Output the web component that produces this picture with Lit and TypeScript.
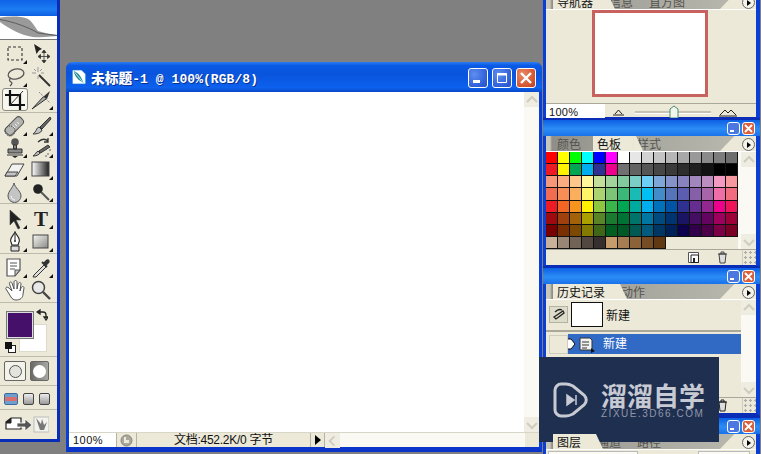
import { LitElement, html, css, svg } from "lit";
import { customElement } from "lit/decorators.js";

const SWATCHES = [
  "ff0000 ffff00 00ff00 00ffff 0000ff ff00ff ffffff e6e6e6 d2d2d2 c4c4c4 b6b6b6 a8a8a8 999999 8a8a8a 7c7c7c 6e6e6e",
  "ed1c24 fff200 00a651 00aeef 2e3192 ec008c 707070 626262 555555 464646 3a3a3a 2d2d2d 1f1f1f 121212 000000 000000",
  "f7977a f9ad81 fdc68a fff799 c4df9b a3d39c 82ca9d 7bcdc8 6ecff6 7ea7d8 8493ca 8882be a187be bc8dbf f49ac2 f6989d",
  "f26c4f f68e55 fbaf5c fff467 acd372 7cc576 3bb878 1abbb4 00bff3 438cca 5574b9 5c5cb0 8560a8 a864a8 ef6ea8 f16d7e",
  "ed1c24 f26522 f7941d fff200 8dc63f 39b54a 00a651 00a99d 00aeef 0072bc 0054a6 2e3192 662d91 92278f ec008c ed145b",
  "9e0b0f a0410d a36209 aba000 598527 1a7b30 007236 00746b 0076a3 004a80 003471 1b1464 440e62 630460 9e005d 9e0039",
  "790000 7b2e00 7d4900 827b00 406618 005e20 005826 005952 005b7f 003663 002157 0d004c 32004b 4b0049 7b0046 7a0026",
  "c7b299 998675 736357 534741 362f2d c69c6d a67c52 8c6239 754c24 603913",
].flatMap((r) => r.split(" "));

const ic = (body: unknown) =>
  html`<svg class="ico" viewBox="0 0 22 22" width="22" height="22">${body}</svg>`;

const ICONS = {
  marquee: svg`<rect x="4" y="4" width="14" height="13" fill="none" stroke="#333" stroke-width="1.1" stroke-dasharray="3 2"/>`,
  move: svg`<path d="M4 1l8 5-3 1.500L6.500 11z" fill="#222"/><path d="M14 8v11M9 13.500h10M14 7l-2 2.500h4zM14 20l-2-2.500h4zM8 13.500l2.500-2v4zM20 13.500l-2.500-2v4z" stroke="#333" fill="#333" stroke-width=".8"/>`,
  lasso: svg`<ellipse cx="12" cy="8" rx="8" ry="5" transform="rotate(-12 12 8)" fill="none" stroke="#555" stroke-width="1.300"/><path d="M7 12c-2 1-2 3 0 4s0 3-1 4" fill="none" stroke="#555" stroke-width="1.300"/>`,
  wand: svg`<path d="M9 9l11 11" stroke="#333" stroke-width="2"/><path d="M8 1v5M8 10v3M2 7h4M11 7h3M4 3l2 2M12 3l-2 2" stroke="#999" stroke-width="1"/>`,
  crop: svg`<path d="M6 1v15h15M1 6h15v15" fill="none" stroke="#111" stroke-width="2.200"/><path d="M5 17L19 2" stroke="#333" stroke-width="1"/>`,
  slice: svg`<path d="M2 20L14 7l2 3z" fill="#aaa" stroke="#333"/><path d="M13 8l7-6-3 8z" fill="#333"/><path d="M9 3l11 11" stroke="#888" stroke-width="1" stroke-dasharray="2 1"/>`,
  heal: svg`<rect x="6" y="1" width="9" height="21" rx="3.500" transform="rotate(45 11 11)" fill="#b4b4b0" stroke="#555"/><circle cx="6" cy="16" r="5" fill="none" stroke="#333" stroke-dasharray="1 1"/><path d="M9 11l2 2M11 9l2 2M13 7l2 2" stroke="#eee"/>`,
  brush: svg`<path d="M20 2L10 12l2 2L21 4z" fill="#666" stroke="#333"/><path d="M9 12c-3 1-2 4-6 7 4 0 8-1 9-4z" fill="#c4c4c4" stroke="#333"/>`,
  stamp: svg`<circle cx="11" cy="5" r="3.800" fill="#555"/><path d="M9.500 8h3v4h-3zM4 12h14v4H4zM3 18h16" fill="#888" stroke="#333"/><path d="M8 19l3 2 3-2z" fill="#222"/>`,
  hbrush: svg`<path d="M8 5c4-4 8-3 10-1M18 1v4h-4" fill="none" stroke="#333" stroke-width="1.300"/><path d="M18 8L9 14l1.500 2L20 10z" fill="#666" stroke="#333"/><path d="M8 14c-2 1-2 3-5 5 3 0 6-1 7-3z" fill="#bbb" stroke="#333"/><path d="M20 12v2M18 16v2M15 19h2" stroke="#666"/>`,
  eraser: svg`<path d="M8 5h12l-7 12H1z" fill="#f2f2f0" stroke="#444"/><path d="M3 13h11l-3 4H1z" fill="#c4c4c4" stroke="#444"/>`,
  gradient: svg`<defs><linearGradient id="g1"><stop offset="0" stop-color="#fff"/><stop offset="1" stop-color="#222"/></linearGradient></defs><rect x="2" y="3" width="17" height="14" fill="url(#g1)" stroke="#444"/>`,
  blur: svg`<path d="M10 2c-1 5-6 8-6 13a6.500 6.500 0 0 0 13 0c0-5-6-8-7-13z" fill="#c4c4c4" stroke="#555"/><path d="M7 15c0 2 2 4 4 4" stroke="#fff" fill="none"/>`,
  dodge: svg`<circle cx="8" cy="8" r="4.800" fill="#222"/><path d="M11 11l8 8" stroke="#555" stroke-width="2"/>`,
  select: svg`<path d="M6 2v15l4-4 4 8 2-1-4-8h5z" fill="#222" stroke="#444" stroke-width=".6"/>`,
  pen: svg`<path d="M11 1c1 3 6 6 4 10l-1 3H8l-1-3C5 7 10 4 11 1z" fill="#fff" stroke="#222" stroke-width="1.100"/><path d="M11 3v6" stroke="#222"/><circle cx="11" cy="10" r="1" fill="#222"/><path d="M7 15h8v5H7z" fill="#ddd" stroke="#222"/>`,
  shape: svg`<defs><linearGradient id="g2" x1="0" y1="0" x2="1" y2="1"><stop offset="0" stop-color="#f5f5f2"/><stop offset="1" stop-color="#8a8a88"/></linearGradient></defs><rect x="3" y="4" width="15" height="13" fill="url(#g2)" stroke="#444"/>`,
  notes: svg`<path d="M3 2h13v11l-5 6H3z" fill="#fff" stroke="#555" stroke-width="1.200"/><path d="M6 6h7M6 9h7M6 12h5" stroke="#555"/><path d="M16 13l-5 6v-6z" fill="#c4c4c4" stroke="#555"/>`,
  dropper: svg`<path d="M4 18l10-10 2 2L6 20H3z" fill="#ddd" stroke="#333"/><path d="M13 6l3-3c2-2 5 1 3 3l-3 3z" fill="#333"/><path d="M12 5l5 5" stroke="#333" stroke-width="2"/>`,
  hand: svg`<path d="M5 9c-2-2-4 0-3 1l5 8c1 2 3 3 5 3 4 0 7-2 7-6l1-6c0-2-2-2-3 0l-1 3 1-7c0-2-2-2-3 0l-1 5V3c0-2-3-2-3 0v7L8 4C7 2 5 3 5.500 5L8 12z" fill="#fff" stroke="#555" stroke-width="1"/>`,
  zoom: svg`<circle cx="8.500" cy="8.500" r="6" fill="#e8e8e8" stroke="#444" stroke-width="1.500"/><path d="M13 13l7 7" stroke="#444" stroke-width="2.400"/>`,
};

const chevUp = svg`<path d="M3 10l5-5 5 5" fill="none" stroke="#cfcdbd" stroke-width="2"/>`;
const chevDown = svg`<path d="M3 6l5 5 5-5" fill="none" stroke="#cfcdbd" stroke-width="2"/>`;

@customElement("app-root")
export class AppRoot extends LitElement {
  static styles = css`
    :host {
      display: block;
      position: relative;
      width: 761px;
      height: 454px;
      overflow: hidden;
      background: #808080;
      font-family: "Liberation Sans", "Noto Sans CJK SC", sans-serif;
      font-size: 12px;
      color: #111;
    }
    .ico { display: block; }

    /* toolbox */
    .toolbox {
      position: absolute; left: 0; top: 0; width: 57px; height: 439px;
      background: #ece9d8;
      border-right: 3px solid #0a2db8;
      border-bottom: 3px solid #0a2db8;
      display: flex; flex-direction: column;
    }
    .tool-title { height: 16px; background: linear-gradient(#0f63e6, #1c7cf2 60%, #0d5fe0); flex: none; }
    .feather { height: 23px; background: #fff; flex: none; border-bottom: 1px solid #777; display: block; }
    .grp { flex: none; display: grid; grid-template-columns: 26px 26px; padding-left: 2px; border-bottom: 1px solid #bdbbab; box-sizing: border-box; }
    .g1 { height: 73px; padding-top: 2px; grid-auto-rows: 23px; }
    .g2 { height: 91px; padding-top: 2px; grid-auto-rows: 22px; }
    .g3 { height: 50px; padding-top: 3px; grid-auto-rows: 23px; }
    .g4 { height: 49px; padding-top: 3px; grid-auto-rows: 22px; }
    .tool { position: relative; display: flex; align-items: center; justify-content: center; }
    .tool.fly::after {
      content: ""; position: absolute; right: 1px; bottom: 1px;
      border-left: 4px solid transparent; border-bottom: 4px solid #111;
    }
    .tool.on { background: #f7f6ef; border: 1px solid #8d8c80; border-radius: 3px; box-sizing: border-box; }
    .t-letter { font: bold 21px "Liberation Serif", serif; color: #222; line-height: 22px; }
    .colors { position: relative; height: 54px; flex: none; border-bottom: 1px solid #bdbbab; box-sizing: border-box; }
    .bg { position: absolute; left: 19px; top: 21px; width: 28px; height: 28px; background: #fff; border: 1px solid #dcdacb; box-sizing: border-box; }
    .fg { position: absolute; left: 7px; top: 9px; width: 26px; height: 26px; background: #44106a; border: 1px solid #ddd; outline: 1px solid #777; box-sizing: border-box; }
    .swap { position: absolute; left: 36px; top: 6px; }
    .mini { position: absolute; left: 5px; top: 39px; width: 11px; height: 11px; }
    .masks { height: 29px; flex: none; display: flex; gap: 4px; padding: 4px 0 0 4px; box-sizing: border-box; border-bottom: 1px solid #bdbbab; }
    .mask { width: 22px; height: 20px; border: 1px solid #666; box-sizing: border-box; display: flex; align-items: center; justify-content: center; background: #f4f3ea; border-radius: 2px; }
    .mask.dark { width: 19px; background: linear-gradient(90deg, #6a6a66, #a8a8a2); }
    .mask i { width: 13px; height: 13px; border-radius: 50%; background: #e4e4de; border: 1px solid #555; box-sizing: border-box; }
    .mask.dark i { background: #fff; border: 0; }
    .modes { height: 24px; flex: none; display: flex; gap: 5px; padding: 7px 0 0 4px; box-sizing: border-box; border-bottom: 1px solid #bdbbab; }
    .mode { width: 9px; height: 10px; border: 1px solid #444; border-radius: 2px; background: linear-gradient(#eee, #999); }
    .mode.on { width: 12px; background: linear-gradient(#6f9fce 30%, #d8716e 30%, #d8716e 70%, #6f9fce 70%); border-color: #3b6c9c; }
    .jump { flex: none; padding: 6px 0 0 5px; }

    /* document window */
    .doc {
      position: absolute; left: 66px; top: 62px; width: 470px; height: 385px;
      border: 3px solid #0a3fd6; border-top: 0; border-bottom: 5px solid #0a35c8;
      border-radius: 7px 7px 0 0;
      background: #fff; display: flex; flex-direction: column;
    }
    .doc-title {
      height: 30px; margin: 0 -3px; flex: none; border-radius: 7px 7px 0 0;
      background: linear-gradient(#2a7df2 0, #0a5ae6 12%, #0a54dc 40%, #0c61ee 85%, #0848c8);
      display: flex; align-items: center; padding: 0 6px; gap: 4px;
    }
    .doc-name {
      flex: 1; color: #fff; font: bold 13px "Liberation Mono", "Noto Sans CJK SC", monospace;
      text-shadow: 1px 1px 0 #08308f; white-space: pre; margin-left: 1px; letter-spacing: .06px;
    }
    .doc-name b { font-size: 13.700px; }
    .wbtn {
      width: 20px; height: 20px; box-sizing: border-box; border: 1px solid #fff; border-radius: 3px;
      background: radial-gradient(circle at 30% 30%, #5f8df0, #2f5fd8 70%, #2a50c0);
      display: flex; align-items: center; justify-content: center; margin-top: 2px;
    }
    .wbtn.close { background: radial-gradient(circle at 30% 30%, #ea8a66, #d4532f 70%, #b93f20); }
    .doc-main { flex: 1; display: flex; min-height: 0; }
    .canvas { flex: 1; background: #fff; }
    .status { height: 14px; flex: none; display: flex; background: #ece9d8; border-top: 1px solid #d8d6c6; font-size: 12px; line-height: 14px; }
    .st-zoom { width: 47px; background: #fff; padding-left: 4px; box-sizing: border-box; font-size: 11px; letter-spacing: .5px; }
    .st-ico { width: 21px; display: flex; align-items: center; justify-content: center; border-left: 1px solid #b5b3a3; border-right: 1px solid #b5b3a3; box-sizing: border-box; }
    .st-text { width: 173px; text-align: center; box-sizing: border-box; white-space: nowrap; letter-spacing: -.25px; }
    .st-tri { width: 15px; border-left: 1px solid #b5b3a3; border-right: 1px solid #b5b3a3; display: flex; align-items: center; justify-content: center; box-sizing: border-box; }
    .st-tri::after { content: ""; border-left: 6px solid #000; border-top: 5px solid transparent; border-bottom: 5px solid transparent; }
    .hscroll { flex: 1; background: #faf9f4; display: flex; }
    .vscroll { width: 15px; flex: none; background: #faf9f4; display: flex; flex-direction: column; justify-content: space-between; }
    .vscroll.wide { width: 18px; align-items: flex-end; }
    .vscroll .btn, .hscroll .btn { width: 15px; height: 15px; background: #efede1; display: flex; align-items: center; justify-content: center; flex: none; }
    .corner { width: 14px; flex: none; background: #ece9d8; }

    /* palettes */
    .panel {
      position: absolute; left: 543px; width: 210px;
      border-left: 3px solid #0a3fd6; border-right: 4px solid #0a3fd6;
      background: #ece9d8; display: flex; flex-direction: column; box-sizing: content-box;
    }
    .p1 { top: -24px; height: 141px; border-bottom: 1px solid #0a2db8; }
    .p2 { top: 118px; height: 147px; border-bottom: 3px solid #0a2db8; }
    .p3 { top: 266px; height: 147px; border-bottom: 3px solid #0a2db8; }
    .p4 { top: 416px; height: 60px; }
    .ptitle {
      height: 16px; flex: none; border-top: 2px solid #0a2db8;
      margin: 0 -4px 0 -3px;
      background: linear-gradient(#0c60e4, #2c8df6 55%, #1a72ea);
      display: flex; justify-content: flex-end; align-items: center; gap: 2px; padding-right: 5px;
    }
    .pbtn {
      width: 13px; height: 13px; box-sizing: border-box; border: 1px solid #fff; border-radius: 3px;
      background: #4a78e0; display: flex; align-items: center; justify-content: center;
    }
    .pbtn.close { background: #d9603c; }
    .tabs {
      position: relative; height: 15px; flex: none; display: flex; padding-left: 7px;
      border-bottom: 1px solid #fff; line-height: 18px; font-size: 12px;
      background: linear-gradient(90deg, #c9c7b8 0, #c9c7b8 4px, #8f8e88 6px, #a6a59d 40%, #bcbbb0 100%);
    }
    .tab { position: relative; padding: 0 12px 0 4px; color: #55544e; white-space: nowrap; }
    .tab.on { background: #ece9d8; color: #111; z-index: 1; }
    .tab.on::after {
      content: ""; position: absolute; top: 0; bottom: 0; right: -10px; width: 10px;
      background: #ece9d8; clip-path: polygon(0 0, 30% 0, 100% 100%, 0 100%);
    }
    .tabs-end {
      position: absolute; right: 0; top: 0; width: 36px; height: 15px; background: #ece9d8;
      clip-path: polygon(40% 0, 100% 0, 100% 100%, 0 100%);
    }
    .menu {
      position: absolute; right: 1px; top: 2px; width: 13px; height: 13px; border-radius: 50%;
      border: 1px solid #666; background: #f4f3ea; box-sizing: border-box;
      display: flex; align-items: center; justify-content: center;
    }
    .menu::after { content: ""; border-left: 4px solid #000; border-top: 3px solid transparent; border-bottom: 3px solid transparent; }
    .pbody { flex: 1; display: flex; min-height: 0; }
    .pmain { flex: 1; min-width: 0; display: flex; flex-direction: column; }
    .pstatus { height: 15px; flex: none; border-top: 1px solid #a9a89a; display: flex; align-items: center; justify-content: flex-end; background: #ece9d8; box-sizing: content-box; }
    .pstatus .grip { width: 14px; height: 15px; border-left: 1px solid #cfcdbd; box-sizing: border-box; background: radial-gradient(circle, #aaa 1px, transparent 1.300px) 0 0 / 5px 5px; flex: none; }

    .nav { flex: 1; display: flex; align-items: center; justify-content: center; padding-bottom: 6px; padding-right: 2px; }
    .thumb { width: 110px; height: 81px; border: 3px solid #c8625e; background: #fff; }
    .navbar { height: 16px; flex: none; display: flex; align-items: center; border-top: 1px solid #a9a89a; }
    .nav-input { width: 59px; height: 16px; background: #fff; font-size: 11px; line-height: 16px; padding-left: 3px; box-sizing: border-box; letter-spacing: .3px; }
    .nav-s { margin-left: 8px; }
    .track { position: relative; width: 76px; height: 2px; margin: 0 8px 0 10px; background: #c4c2b2; border-bottom: 1px solid #fff; }
    .knob { position: absolute; left: 34px; top: -6px; }

    .sw-grid { display: grid; grid-template-columns: repeat(16, 12px); grid-auto-rows: 12.125px; width: 192px; flex: none; }
    .sw { box-shadow: inset -1px -1px 0 #111; }
    .sw-ic { margin-right: 18px; }
    .sw-ic2 { margin-right: 14px; }

    .h-row1 { height: 32px; flex: none; display: flex; align-items: center; border-bottom: 2px solid #a9a89a; box-sizing: border-box; padding-bottom: 1px; }
    .snap { width: 17px; height: 15px; margin: 0 3px 0 3px; border: 1px solid #b5b3a3; background: #dedcca; display: flex; align-items: center; justify-content: center; }
    .h-thumb { width: 32px; height: 25px; background: #fff; border: 1px solid #111; box-sizing: border-box; margin-right: 3px; }
    .h-row2 { height: 20px; margin-top: 2px; flex: none; display: flex; align-items: center; }
    .chk { width: 19px; height: 19px; margin-left: 3px; border: 1px solid #cfcdbd; box-sizing: border-box; flex: none; }
    .sel { flex: 1; height: 20px; background: #316ac5; color: #fff; display: flex; align-items: center; position: relative; }
    .sel svg { flex: none; }
    .sel span { margin-left: 3px; padding-bottom: 3px; }
    .layers { margin-top: 1px; height: 8px; display: flex; justify-content: space-between; padding: 0 6px 0 2px; }
    .layers i { display: block; background: #fbfaf5; border: 1px solid #bbb; box-sizing: border-box; }
    .layers i:first-child { width: 90px; }
    .layers i:last-child { width: 52px; }

    /* watermark */
    .wm {
      position: absolute; left: 539px; top: 357px; width: 180px; height: 85px; background: #1f2f50;
      display: flex; align-items: center; gap: 12px; padding-left: 14px; box-sizing: border-box;
    }
    .wm-t { color: #c7cad2; font: bold 26px/27px "Noto Sans CJK SC", sans-serif; letter-spacing: 0; white-space: nowrap; }
    .wm-s { color: #8f97a9; font: 10px/10px "Liberation Sans", sans-serif; letter-spacing: 1.500px; margin-top: 1px; white-space: nowrap; }
  `;

  private tool(name: keyof typeof ICONS, fly = false, on = false) {
    return html`<div class="tool ${fly ? "fly" : ""} ${on ? "on" : ""}">${ic(ICONS[name])}</div>`;
  }

  private title() {
    return html`<div class="ptitle">
      <div class="pbtn"><svg width="9" height="9"><path d="M1 7h4" stroke="#fff" stroke-width="2"/></svg></div>
      <div class="pbtn close"><svg width="9" height="9"><path d="M1 1l7 7M8 1L1 8" stroke="#fff" stroke-width="1.800"/></svg></div>
    </div>`;
  }

  private tabs(names: string[], active: number) {
    return html`<div class="tabs">
      ${names.map((n, i) => html`<div class="tab ${i === active ? "on" : ""}">${n}</div>`)}
      <div class="tabs-end"></div>
      <div class="menu"></div>
    </div>`;
  }

  private vscroll(wide = false) {
    return html`<div class="vscroll ${wide ? "wide" : ""}">
      <div class="btn"><svg width="16" height="16">${chevUp}</svg></div>
      <div class="btn"><svg width="16" height="16">${chevDown}</svg></div>
    </div>`;
  }

  render() {
    return html`
      <div class="toolbox">
        <div class="tool-title"></div>
        <svg class="feather" width="57" height="23" viewBox="0 0 57 23">
          <path d="M0 1.500C10 0 20 0 27 2.500c5 2 8 9 11 12.500 6 2 12 3 19 4v1c-8 1-16 1.500-24 1C20 19 8 12 0 6z" fill="#9a9a9a"/>
          <path d="M0 3.500C14 6 28 11 38 17l19 2.500" stroke="#5c5c5c" fill="none"/>
        </svg>
        <div class="grp g1">
          ${this.tool("marquee", true)}${this.tool("move")}
          ${this.tool("lasso", true)}${this.tool("wand")}
          ${this.tool("crop", false, true)}${this.tool("slice", true)}
        </div>
        <div class="grp g2">
          ${this.tool("heal", true)}${this.tool("brush", true)}
          ${this.tool("stamp", true)}${this.tool("hbrush", true)}
          ${this.tool("eraser", true)}${this.tool("gradient", true)}
          ${this.tool("blur", true)}${this.tool("dodge", true)}
        </div>
        <div class="grp g3">
          ${this.tool("select", true)}
          <div class="tool fly"><span class="t-letter">T</span></div>
          ${this.tool("pen", true)}${this.tool("shape", true)}
        </div>
        <div class="grp g4">
          ${this.tool("notes", true)}${this.tool("dropper", true)}
          ${this.tool("hand")}${this.tool("zoom")}
        </div>
        <div class="colors">
          <div class="bg"></div>
          <div class="fg"></div>
          <svg class="swap" width="12" height="12" viewBox="0 0 12 12"><path d="M2 3h5c2 0 3 1 3 3v3M1 3l3-2v4zM10 11L8 8h4z" fill="none" stroke="#222" stroke-width="1.300"/></svg>
          <svg class="mini" viewBox="0 0 11 11"><rect x="3.500" y="3.500" width="7" height="7" fill="#fff" stroke="#222"/><rect x="0" y="0" width="7" height="7" fill="#111"/></svg>
        </div>
        <div class="masks">
          <div class="mask"><i></i></div>
          <div class="mask dark"><i></i></div>
        </div>
        <div class="modes">
          <div class="mode on"></div><div class="mode"></div><div class="mode"></div>
        </div>
        <div class="jump">
          <svg width="44" height="17" viewBox="0 0 44 17" class="ico">
            <path d="M1 6l5-4h10v11H1z" fill="#fff" stroke="#222" stroke-width="1.200"/><path d="M6 2v5H1z" fill="#222" stroke="#222"/>
            <path d="M12 7h8V3l7 6-7 6v-4h-8z" fill="#555" stroke="#fff" stroke-width=".8"/>
            <rect x="29" y="1" width="15" height="15" fill="#f3f3ee" stroke="#bbb"/>
            <path d="M31 2l5 6 1-5 2 6 3-3-3 8h-4z" fill="#777"/>
          </svg>
        </div>
      </div>

      <div class="doc">
        <div class="doc-title">
          <svg width="14" height="16" viewBox="0 0 16 17" class="ico">
            <path d="M1 1h10l4 4v11H1z" fill="#fff" stroke="#cfe" stroke-width=".6"/>
            <path d="M2 2c5 1 9 7 11 13-5-2-10-7-11-13z" fill="#1a8a96"/>
            <path d="M3 3l9 11" stroke="#d8f4f0"/>
          </svg>
          <div class="doc-name"><b>未标题</b>-1 @ 100%(RGB/8)</div>
          <div class="wbtn"><svg width="14" height="14"><path d="M2 10.500h7" stroke="#fff" stroke-width="3"/></svg></div>
          <div class="wbtn"><svg width="14" height="14"><path d="M2.500 2.500h9v9h-9z" fill="none" stroke="#fff"/><path d="M2 3.500h10" stroke="#fff" stroke-width="2"/></svg></div>
          <div class="wbtn close"><svg width="14" height="14"><path d="M2 2l10 10M12 2L2 12" stroke="#fff" stroke-width="2.400"/></svg></div>
        </div>
        <div class="doc-main">
          <div class="canvas"></div>
          ${this.vscroll()}
        </div>
        <div class="status">
          <div class="st-zoom">100%</div>
          <div class="st-ico"><svg width="13" height="13" viewBox="0 0 13 13"><circle cx="6.500" cy="6.500" r="5.500" fill="#a9a89c" stroke="#87867a"/><path d="M4 3v6h5V6H6V3z" fill="#ece9d8"/></svg></div>
          <div class="st-text">文档:452.2K/0 字节</div>
          <div class="st-tri"></div>
          <div class="hscroll">
            <div class="btn"><svg width="16" height="16" viewBox="0 0 16 16"><path d="M10 3L5 8l5 5" fill="none" stroke="#cfcdbd" stroke-width="2"/></svg></div>
          </div>
          <div class="btn corner"></div>
        </div>
      </div>

      <div class="panel p1">
        ${this.title()}
        ${this.tabs(["导航器", "信息", "直方图"], 0)}
        <div class="nav"><div class="thumb"></div></div>
        <div class="navbar">
          <div class="nav-input">100%</div>
          <svg class="nav-s" width="12" height="8" viewBox="0 0 12 8"><path d="M0 7h11M2 6l3.500-4L9 6" fill="none" stroke="#222"/></svg>
          <div class="track">
            <svg class="knob" width="10" height="14" viewBox="0 0 10 14"><path d="M1 4l4-3 4 3v9H1z" fill="#f0f4ee" stroke="#4a8a6a"/></svg>
          </div>
          <svg width="18" height="9" viewBox="0 0 18 9"><path d="M0 8h18M1 7l5-5 3 3 3-3 5 5" fill="none" stroke="#222"/></svg>
        </div>
      </div>

      <div class="panel p2">
        ${this.title()}
        ${this.tabs(["颜色", "色板", "样式"], 1)}
        <div class="pbody">
          <div class="pmain">
            <div class="sw-grid">
              ${SWATCHES.map((c) => html`<div class="sw" style="background:#${c}"></div>`)}
            </div>
          </div>
          ${this.vscroll(true)}
        </div>
        <div class="pstatus">
          <svg class="sw-ic" width="11" height="11" viewBox="0 0 11 11"><path d="M.5.5h10v10H.5z" fill="#fff" stroke="#555"/><path d="M3 3h7.500v7.500H3z" fill="none" stroke="#222"/><path d="M6 10V6" stroke="#222" stroke-width="2"/></svg>
          <svg class="sw-ic2" width="11" height="13" viewBox="0 0 11 13"><path d="M1 3h9M4 3V1h3v2M2 3l1 9h5l1-9z" fill="#ddd" stroke="#444"/></svg>
          <div class="grip"></div>
        </div>
      </div>

      <div class="panel p3">
        ${this.title()}
        ${this.tabs(["历史记录", "动作"], 0)}
        <div class="pbody">
          <div class="pmain">
            <div class="h-row1">
              <div class="snap"><svg width="14" height="13" viewBox="0 0 14 13"><path d="M2 9l9-6 1 2-8 6zM3 4c2-2 5-3 7-2" fill="none" stroke="#222" stroke-width="1.300"/></svg></div>
              <div class="h-thumb"></div>
              <span>新建</span>
            </div>
            <div class="h-row2">
              <div class="chk"></div>
              <div class="sel">
                <svg width="32" height="17" viewBox="0 0 32 17">
                  <path d="M-2 3h5l4 5-4 5h-5z" fill="#fff" stroke="#111"/>
                  <path d="M12 2h10l2 2v10H12z" fill="#f2f2f2" stroke="#333"/>
                  <path d="M14 6h7M14 9h7M14 12h5" stroke="#333"/>
                  <path d="M23 12l4 3-4 2z" fill="#111"/>
                </svg>
                <span>新建</span>
              </div>
            </div>
          </div>
          ${this.vscroll()}
        </div>
        <div class="pstatus">
          <svg class="sw-ic2" width="11" height="13" viewBox="0 0 11 13"><path d="M1 3h9M4 3V1h3v2M2 3l1 9h5l1-9z" fill="#ddd" stroke="#222"/></svg>
          <div class="grip"></div>
        </div>
      </div>

      <div class="panel p4">
        ${this.title()}
        ${this.tabs(["图层", "通道", "路径"], 0)}
        <div class="layers"><i></i><i></i></div>
      </div>

      <div class="wm">
        <svg width="36" height="38" viewBox="0 0 36 38" class="ico">
          <path d="M8 3h5c3 0 5 1 7 2l11 9c3 3 3 7 0 10L20 33c-2 1-4 2-7 2H8c-3 0-6-3-6-6V9c0-3 3-6 6-6z" fill="none" stroke="#c7cad2" stroke-width="3"/>
          <path d="M14 14l7 5-7 5zM23 14v10" fill="#c7cad2" stroke="#c7cad2" stroke-width="1.500"/>
        </svg>
        <div>
          <div class="wm-t">溜溜自学</div>
          <div class="wm-s">ZIXUE.3D66.COM</div>
        </div>
      </div>
    `;
  }
}
